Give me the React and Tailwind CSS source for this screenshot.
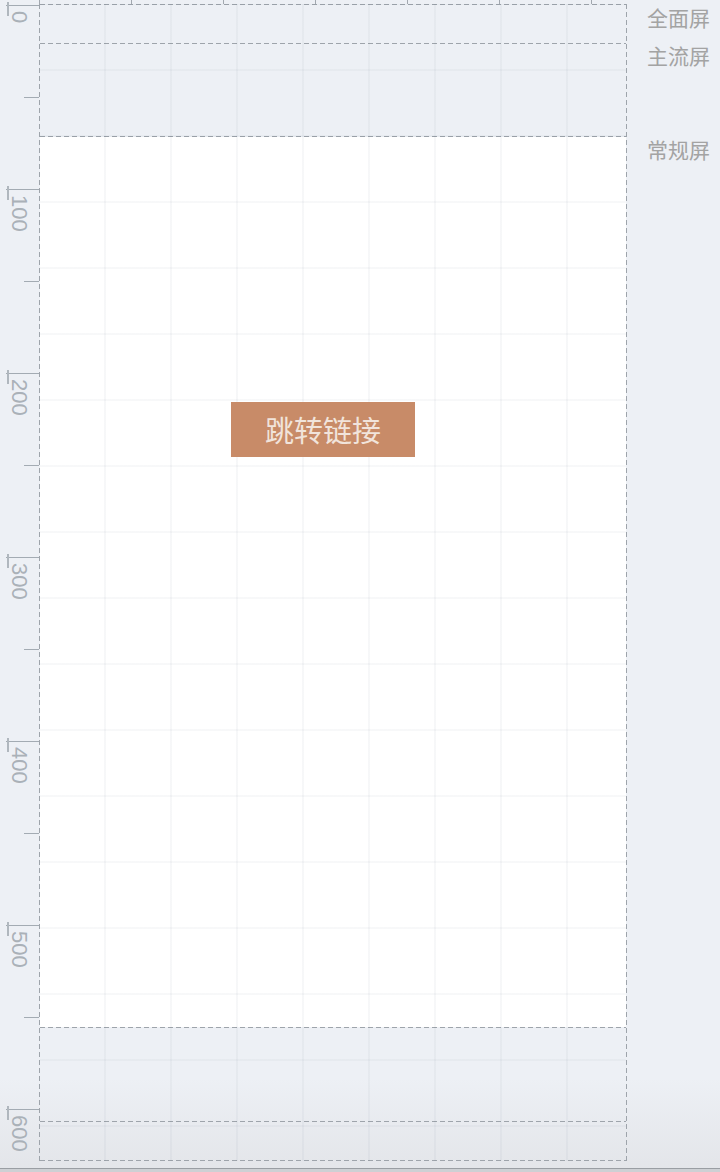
const rulerLabels = ["0", "100", "200", "300", "400", "500", "600"];

const dashH =
  "h-px shrink-0 bg-[repeating-linear-gradient(to_right,#9ea4ab_0_5px,transparent_5px_8px)]";
const dashV =
  "w-px shrink-0 bg-[repeating-linear-gradient(to_bottom,#9ea4ab_0_5px,transparent_5px_8px)]";

function RulerSegment({ label }) {
  return (
    <div className="relative h-[184px] shrink-0">
      <div className="ml-[6px] h-px bg-[#a3abb3]" />
      <div className="absolute left-[7px] top-[-3px] h-[14px] w-[2px] bg-[#b0b7be]" />
      <div className="ml-[8px] mt-[5px] w-[22px] text-[22px] leading-none text-[#aab1b8] [writing-mode:vertical-rl]">
        {label}
      </div>
      <div className="absolute left-[24px] top-[92px] h-px w-[15px] bg-[#a3abb3]" />
    </div>
  );
}

function ScreenLabel({ children, className = "" }) {
  return (
    <div className={`text-[21px] leading-[28px] text-[#a3a3a3] ${className}`}>
      {children}
    </div>
  );
}

export default function App() {
  return (
    <div className="flex h-[1172px] w-[720px] flex-col overflow-hidden bg-[linear-gradient(to_bottom,#edf0f5_92%,#e3e5e9)] font-['Liberation_Sans','Noto_Sans_CJK_SC',sans-serif]">
      <div className="flex h-[1168px] shrink-0">
        {/* vertical ruler */}
        <div className="flex w-[39px] shrink-0 flex-col overflow-hidden pt-[5px]">
          {rulerLabels.map((label) => (
            <RulerSegment key={label} label={label} />
          ))}
        </div>

        {/* canvas */}
        <div className="flex w-[588px] shrink-0 flex-col">
          <div className="h-[4px] shrink-0 bg-[repeating-linear-gradient(to_right,#a2a8af_0_1px,transparent_1px_92px)]" />
          <div className="flex h-[1157px] shrink-0">
            <div className={dashV} />
            <div className="relative flex flex-1 flex-col">
              <div className={dashH} />
              <div className="h-[38px] shrink-0" />
              <div className={dashH} />
              <div className="h-[92px] shrink-0" />
              <div className={dashH} />
              <div className="relative h-[890px] shrink-0 bg-white">
                <button
                  type="button"
                  className="absolute left-[191px] top-[265px] z-10 flex h-[55px] w-[184px] items-center justify-center bg-[#c88b68] font-['Noto_Sans_CJK_SC',sans-serif] text-[29px] text-[#f1e4db]"
                >
                  跳转链接
                </button>
              </div>
              <div className={dashH} />
              <div className="h-[93px] shrink-0" />
              <div className={dashH} />
              <div className="h-[38px] shrink-0" />
              <div className={dashH} />
              <div className="pointer-events-none absolute inset-0 bg-[linear-gradient(to_right,rgba(40,60,90,0.04)_2px,transparent_2px),linear-gradient(to_bottom,rgba(40,60,90,0.035)_2px,transparent_2px)] bg-[size:66px_66px] bg-[position:64px_65px]" />
            </div>
            <div className={dashV} />
          </div>
        </div>

        {/* screen size labels */}
        <div className="flex flex-1 flex-col pl-[20px] pt-[3px] font-['Noto_Sans_CJK_SC',sans-serif]">
          <ScreenLabel>全面屏</ScreenLabel>
          <ScreenLabel className="mt-[10px]">主流屏</ScreenLabel>
          <ScreenLabel className="mt-[66px]">常规屏</ScreenLabel>
        </div>
      </div>
      <div className="h-[4px] shrink-0 border-t border-[#9a9ea3] bg-[#cdd0d4]" />
    </div>
  );
}
